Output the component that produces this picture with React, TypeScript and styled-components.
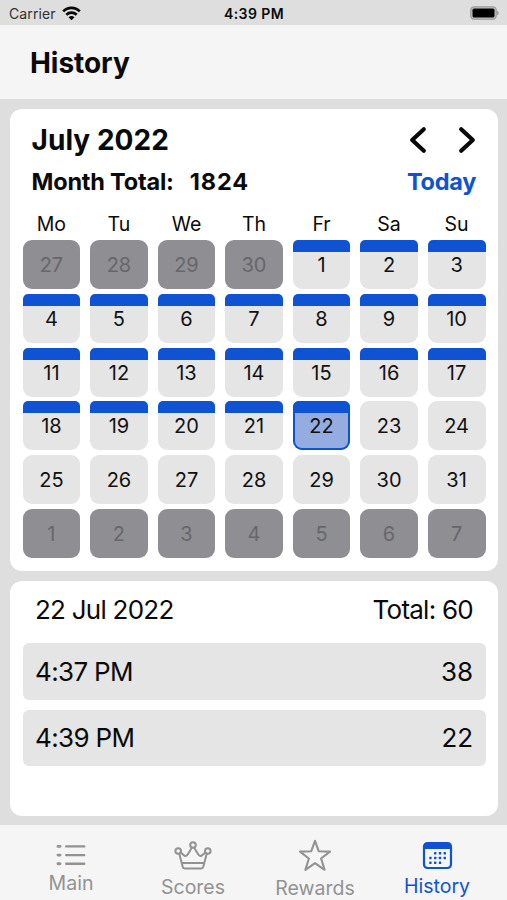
import React from "react";
import styled, { createGlobalStyle } from "styled-components";

const BLUE = "#1053d2";

const GlobalStyle = createGlobalStyle`
  * { box-sizing: border-box; }
  body {
    margin: 0;
    background: #dedede;
    font-family: Inter, "Liberation Sans", sans-serif;
    color: #0a0a0a;
  }
  button { font: inherit; border: 0; padding: 0; background: none; color: inherit; letter-spacing: inherit; }
  h1, h2, p { margin: 0; }
`;

const Screen = styled.div`
  width: 507px;
  height: 900px;
  display: flex;
  flex-direction: column;
  overflow: hidden;
  background: #dedede;
`;

const StatusBar = styled.div`
  height: 25px;
  display: grid;
  grid-template-columns: 1fr auto 1fr;
  align-items: center;
  padding: 3px 8px 0 9px;
  font-size: 14px;
  line-height: 22px;
`;

const Carrier = styled.span`
  display: flex;
  align-items: center;
  gap: 6px;
  color: #303030;
  letter-spacing: 0.12px;
`;

const Clock = styled.span`
  font-weight: 600;
  letter-spacing: 0.4px;
`;

const StatusIcon = styled.svg<{ $end?: boolean }>`
  display: block;
  margin-top: -2px;
  justify-self: ${(p) => (p.$end ? "end" : "start")};
`;

const Header = styled.header`
  height: 74px;
  padding: 20px 30px 0;
  background: #f5f5f5;
`;

const Title = styled.h1`
  font-size: 28px;
  line-height: 36px;
  font-weight: 700;
  letter-spacing: -0.05px;
`;

const Content = styled.main`
  flex: 1;
  display: flex;
  flex-direction: column;
  gap: 10px;
  padding: 10px 9px 9px 10px;
`;

const Card = styled.section<{ $height: number }>`
  height: ${(p) => p.$height}px;
  padding: 0 12.5px;
  border-radius: 12px;
  background: #fff;
`;

const MonthRow = styled.div`
  display: flex;
  justify-content: space-between;
  align-items: center;
  padding: 13px 9px 0;
  height: 48px;
`;

const Month = styled.h2`
  font-size: 28px;
  line-height: 36px;
  font-weight: 700;
  letter-spacing: 0.05px;
`;

const Arrows = styled.div`
  display: flex;
  gap: 31px;
  padding-right: 1px;
`;

const Arrow = styled.button`
  display: flex;
`;

const TotalRow = styled.div`
  display: flex;
  justify-content: space-between;
  height: 50px;
  padding: 10px 9.5px 0 9px;
  font-size: 23.5px;
  line-height: 30px;
  font-weight: 700;
`;

const MonthTotal = styled.p`
  display: flex;
  gap: 16px;
  letter-spacing: -0.2px;
`;

const MonthScore = styled.span`
  letter-spacing: 0.85px;
`;

const Today = styled.button`
  height: 30px;
  color: ${BLUE};
  font-weight: 700;
  letter-spacing: -0.3px;
`;

const Week = styled.div`
  display: grid;
  grid-template-columns: repeat(7, 1fr);
  column-gap: 9.7px;
`;

const Weekdays = styled(Week)`
  height: 33px;
  padding-top: 4px;
  font-size: 19.5px;
  line-height: 26px;
  text-align: center;
`;

const Days = styled(Week)`
  grid-auto-rows: 49px;
  row-gap: 4.8px;
`;

type DayKind = "outside" | "played" | "selected" | "plain";

const Day = styled.button<{ $kind: DayKind }>`
  display: flex;
  align-items: center;
  justify-content: center;
  border-radius: ${(p) => (p.$kind === "played" ? "5px 5px 9px 9px" : p.$kind === "selected" ? "6px 6px 9px 9px" : "9px")};
  font-size: 20px;
  line-height: 24px;
  padding-top: 1px;
  color: ${(p) => (p.$kind === "outside" ? "#67676b" : "#111")};
  background: ${(p) =>
    p.$kind === "outside"
      ? "#8e8e93"
      : p.$kind === "plain"
        ? "#e5e5e5"
        : p.$kind === "played"
          ? `linear-gradient(${BLUE} 12px, #e5e5e5 12px)`
          : `linear-gradient(${BLUE} 12px, #94ace0 12px)`};
  box-shadow: ${(p) => (p.$kind === "selected" ? `inset 0 0 0 2px ${BLUE}` : "none")};
`;

const Summary = styled.div`
  display: flex;
  justify-content: space-between;
  height: 62px;
  padding: 12px 12.5px 0;
  font-size: 26px;
  line-height: 34px;
  letter-spacing: -0.75px;
`;

const Entries = styled.div`
  display: flex;
  flex-direction: column;
  gap: 10px;
`;

const Entry = styled.div`
  display: flex;
  align-items: center;
  justify-content: space-between;
  height: 56.5px;
  padding: 0 12.5px;
  border-radius: 6px;
  background: #e5e5e5;
  font-size: 26px;
  letter-spacing: -0.65px;
`;

const Score = styled.span`
  letter-spacing: -0.1px;
`;

const TabBar = styled.nav`
  height: 75px;
  padding: 0 9px 0 10px;
  display: grid;
  grid-template-columns: repeat(4, 1fr);
  background: #f5f5f5;
`;

const Tab = styled.button<{ $active?: boolean; $top: number; $gap: number }>`
  display: flex;
  flex-direction: column;
  align-items: center;
  gap: ${(p) => p.$gap}px;
  padding-top: ${(p) => p.$top}px;
  font-size: 19.5px;
  line-height: 24px;
  white-space: nowrap;
  color: ${(p) => (p.$active ? BLUE : "#929292")};
`;

const Icon = styled.svg`
  display: block;
  flex: none;
  overflow: visible;
`;

const WifiIcon = () => (
  <StatusIcon width="19" height="15" viewBox="0 0 19 15">
    <g fill="none" stroke="#080808" strokeWidth="2.6">
      <path d="M1.2 5.4C5.8.7 13.2.7 17.8 5.4" />
      <path d="M4.3 8.7c2.9-2.8 7.5-2.8 10.4 0" />
    </g>
    <path d="M9.5 14.2 6.5 11.3c1.7-1.6 4.3-1.6 6 0Z" fill="#080808" />
  </StatusIcon>
);

const BatteryIcon = () => (
  <StatusIcon $end width="29" height="14" viewBox="0 0 29 14">
    <rect x=".8" y=".8" width="25.4" height="12.4" rx="3.5" fill="#c5c5c5" stroke="#9c9c9c" strokeWidth="1.3" />
    <rect x="2.5" y="2.6" width="22" height="8.9" rx="1.6" fill="#000" />
    <path d="M27 4.8c2.2.9 2.2 3.5 0 4.4Z" fill="#9c9c9c" />
  </StatusIcon>
);

const Chevron = ({ next }: { next?: boolean }) => (
  <Icon width="18" height="28" viewBox="0 0 18 28">
    <path
      d={next ? "M3.2 3.2 14.8 14 3.2 24.8" : "M14.8 3.2 3.2 14 14.8 24.8"}
      fill="none"
      stroke="#080808"
      strokeWidth="4.2"
      strokeLinecap="round"
      strokeLinejoin="round"
    />
  </Icon>
);

const ListIcon = () => (
  <Icon width="30" height="22" viewBox="0 0 30 22">
    <g stroke="currentColor" strokeLinecap="round">
      <path d="M2 2.4h2M2 11.1h2M2 19.8h2" strokeWidth="2.9" />
      <path d="M10.2 2.4h18M10.2 11.1h18M10.2 19.8h18" strokeWidth="2.4" />
    </g>
  </Icon>
);

const CrownIcon = () => (
  <Icon width="38" height="29" viewBox="0 0 38 29">
    <g fill="none" stroke="currentColor" strokeWidth="2" strokeLinejoin="round">
      <circle cx="19" cy="4" r="2.8" />
      <circle cx="4.2" cy="10" r="2.8" />
      <circle cx="33.8" cy="10" r="2.8" />
      <path d="M5.3 12.7 8.7 25.7Q9 27.4 10.8 27.4H27.2Q29 27.4 29.3 25.7L32.7 12.7M6.7 11.5C8.5 13.1 11.2 16.3 13.1 14.2 14.8 12.2 16.3 9 17.8 6.7M20.2 6.7C21.7 9 23.2 12.2 24.9 14.2 26.8 16.3 29.5 13.1 31.3 11.5M7.8 22H30.2" />
    </g>
  </Icon>
);

const StarIcon = () => (
  <Icon width="34" height="33" viewBox="0 0 34 33">
    <path
      d="M17 1.8 20.8 12.3 32 12.6 23.1 19.5 26.6 30.8 17 24.2 7.4 30.8 10.9 19.5 2 12.6 13.2 12.3Z"
      fill="none"
      stroke="currentColor"
      strokeWidth="2.1"
      strokeLinejoin="round"
    />
  </Icon>
);

const DOTS = [
  [12.2, 11.3], [17, 11.3], [21.8, 11.3],
  [7.4, 16], [12.2, 16], [17, 16], [21.8, 16],
  [7.4, 20.7], [12.2, 20.7], [17, 20.7],
];

const CalendarIcon = () => (
  <Icon width="29" height="27" viewBox="0 0 29 27">
    <rect x="1" y="1" width="27" height="25" rx="3.5" fill="none" stroke="currentColor" strokeWidth="2.2" />
    <path d="M1 7V4Q1 1 4 1H25Q28 1 28 4V7Z" fill="currentColor" />
    {DOTS.map(([x, y]) => (
      <rect key={`${x}-${y}`} x={x - 1.2} y={y - 1.2} width="2.4" height="2.4" rx=".4" fill="currentColor" />
    ))}
  </Icon>
);

const WEEKDAYS = ["Mo", "Tu", "We", "Th", "Fr", "Sa", "Su"];

const kindOf = (day: number): DayKind =>
  day < 22 ? "played" : day === 22 ? "selected" : "plain";

const DAYS: { day: number; kind: DayKind }[] = [
  ...[27, 28, 29, 30].map((day) => ({ day, kind: "outside" as const })),
  ...Array.from({ length: 31 }, (_, i) => ({ day: i + 1, kind: kindOf(i + 1) })),
  ...[1, 2, 3, 4, 5, 6, 7].map((day) => ({ day, kind: "outside" as const })),
];

const ENTRIES = [
  { time: "4:37 PM", score: 38 },
  { time: "4:39 PM", score: 22 },
];

export default function App() {
  return (
    <Screen>
      <GlobalStyle />
      <StatusBar>
        <Carrier>Carrier <WifiIcon /></Carrier>
        <Clock>4:39 PM</Clock>
        <BatteryIcon />
      </StatusBar>
      <Header><Title>History</Title></Header>
      <Content>
        <Card $height={462}>
          <MonthRow>
            <Month>July 2022</Month>
            <Arrows>
              <Arrow aria-label="Previous month"><Chevron /></Arrow>
              <Arrow aria-label="Next month"><Chevron next /></Arrow>
            </Arrows>
          </MonthRow>
          <TotalRow>
            <MonthTotal><span>Month Total:</span><MonthScore>1824</MonthScore></MonthTotal>
            <Today>Today</Today>
          </TotalRow>
          <Weekdays>{WEEKDAYS.map((name) => <span key={name}>{name}</span>)}</Weekdays>
          <Days>
            {DAYS.map(({ day, kind }, i) => <Day key={i} $kind={kind}>{day}</Day>)}
          </Days>
        </Card>
        <Card $height={235}>
          <Summary><span>22 Jul 2022</span><span>Total: 60</span></Summary>
          <Entries>
            {ENTRIES.map(({ time, score }) => (
              <Entry key={time}><span>{time}</span><Score>{score}</Score></Entry>
            ))}
          </Entries>
        </Card>
      </Content>
      <TabBar>
        <Tab $top={19} $gap={5}><ListIcon />Main</Tab>
        <Tab $top={16} $gap={5}><CrownIcon />Scores</Tab>
        <Tab $top={14} $gap={4}><StarIcon />Rewards</Tab>
        <Tab $top={17} $gap={5} $active><CalendarIcon />History</Tab>
      </TabBar>
    </Screen>
  );
}
